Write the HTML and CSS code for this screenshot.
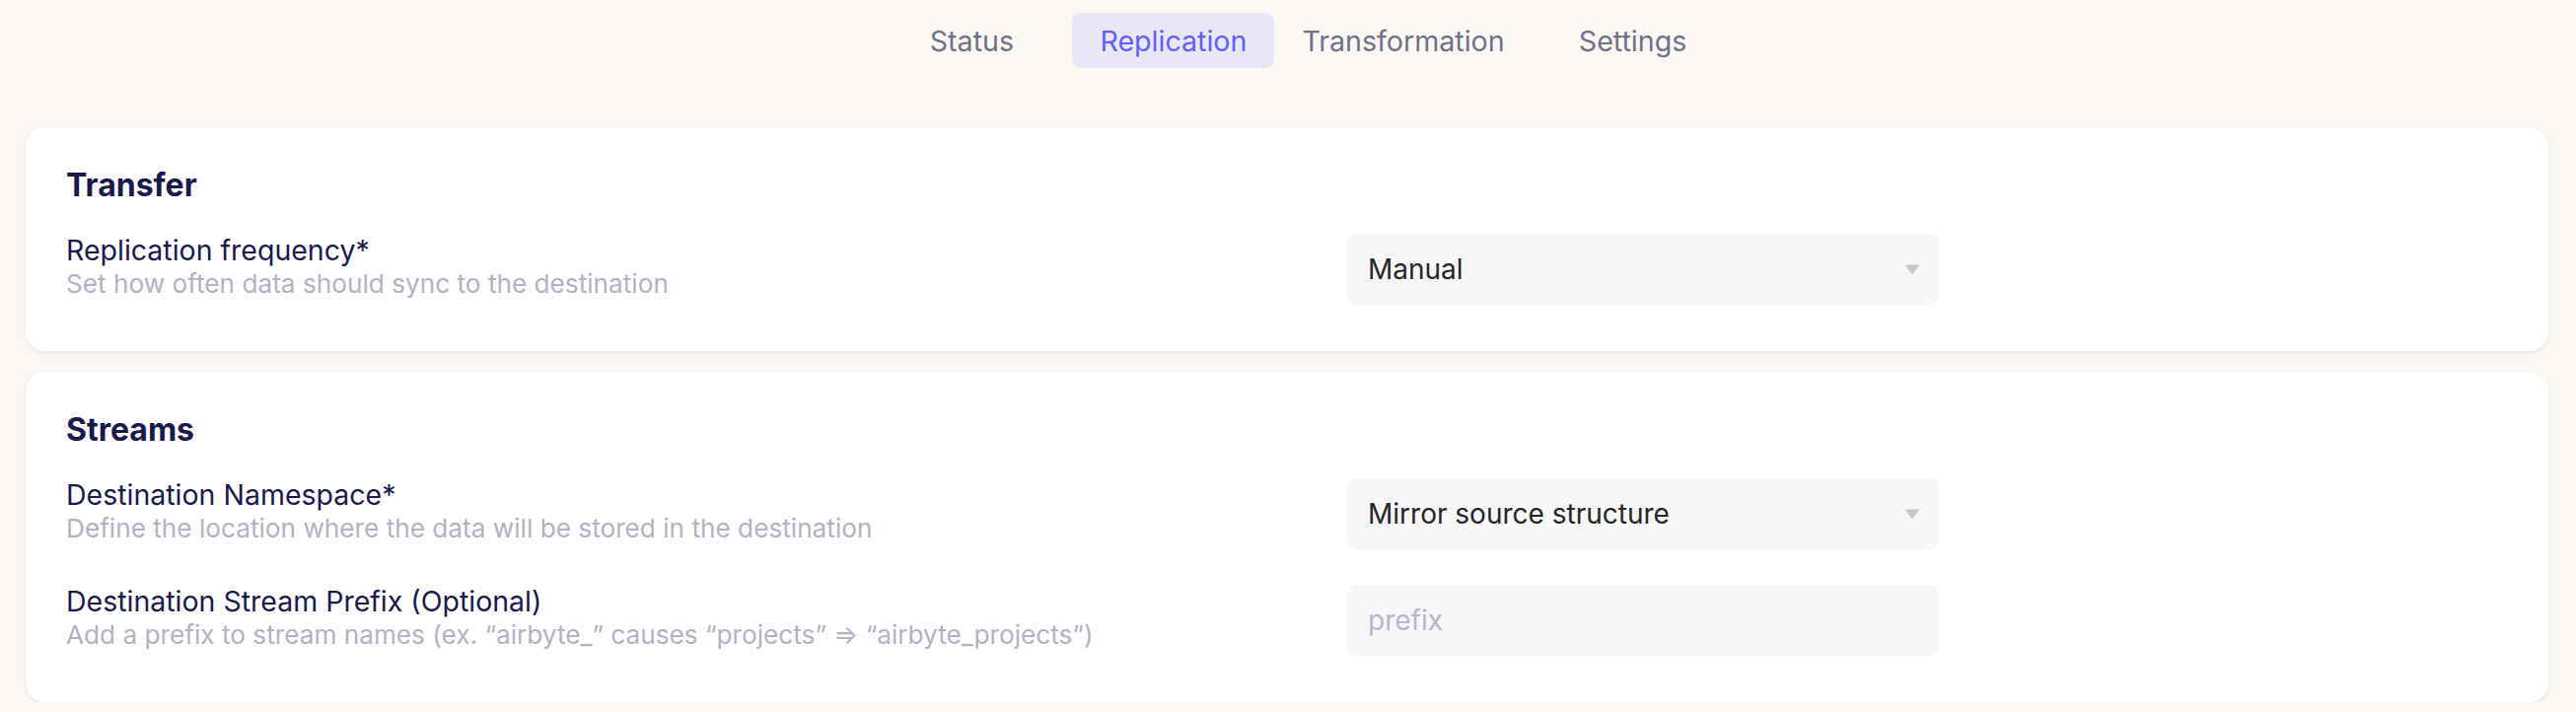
FILE: index.html
```html
<!DOCTYPE html>
<html lang="en">
<head>
<meta charset="utf-8">
<title>Replication</title>
<link rel="stylesheet" href="styles.css">
</head>
<body>
<nav class="tabs">
  <button class="tab">Status</button>
  <button class="tab tab-active">Replication</button>
  <button class="tab">Transformation</button>
  <button class="tab">Settings</button>
</nav>
<main class="content">
  <section class="card">
    <h2 class="card-title">Transfer</h2>
    <div class="fields">
      <div class="field">
        <div class="field-text">
          <div class="field-label">Replication frequency*</div>
          <div class="field-desc">Set how often data should sync to the destination</div>
        </div>
        <div class="select">
          <span class="select-value">Manual</span>
          <svg class="select-arrow" width="18" height="12" viewBox="0 0 18 12"><path d="M1.5 1.5 H16.5 L9.8 10.5 Q9 11.4 8.2 10.5 Z" fill="#c6c6c8"/></svg>
        </div>
      </div>
    </div>
  </section>
  <section class="card">
    <h2 class="card-title">Streams</h2>
    <div class="fields">
      <div class="field">
        <div class="field-text">
          <div class="field-label">Destination Namespace*</div>
          <div class="field-desc">Define the location where the data will be stored in the destination</div>
        </div>
        <div class="select">
          <span class="select-value">Mirror source structure</span>
          <svg class="select-arrow" width="18" height="12" viewBox="0 0 18 12"><path d="M1.5 1.5 H16.5 L9.8 10.5 Q9 11.4 8.2 10.5 Z" fill="#c6c6c8"/></svg>
        </div>
      </div>
      <div class="field">
        <div class="field-text">
          <div class="field-label">Destination Stream Prefix (Optional)</div>
          <div class="field-desc">Add a prefix to stream names (ex. “airbyte_” causes “projects” ⇒ “airbyte_projects”)</div>
        </div>
        <div class="input"><span class="placeholder">prefix</span></div>
      </div>
    </div>
  </section>
</main>
</body>
</html>
```

FILE: styles.css
```css
* { box-sizing: border-box; }

body {
  margin: 0;
  background: #fbf8f4;
  font-family: Inter, "Noto Sans", sans-serif;
  color: #1a194d;
}

.tabs {
  display: flex;
  justify-content: center;
  padding: 13px 0 0 29px;
}

.tab {
  min-width: 204px;
  height: 56px;
  padding: 0 28px;
  border: 0;
  border-radius: 9px;
  background: transparent;
  font-family: Inter, sans-serif;
  font-size: 28.6px;
  color: #717089;
  display: flex;
  align-items: center;
  justify-content: center;
}

.tab-active {
  background: #e9e6f8;
  color: #615eff;
}

.content {
  margin-top: 60px;
  padding: 0 28px 0 26px;
  display: flex;
  flex-direction: column;
  gap: 21px;
}

.card {
  background: #ffffff;
  border-radius: 20px;
  box-shadow: 0 2px 5px rgba(26, 25, 77, 0.09);
  padding: 42px 42px 47px 41px;
}

.card-title {
  margin: 0 0 32px;
  font-size: 32px;
  line-height: 34px;
  font-weight: 700;
  color: #1a194d;
}

.fields {
  display: flex;
  flex-direction: column;
  gap: 36px;
}

.field {
  display: grid;
  grid-template-columns: 1299px 600px;
  align-items: start;
}

.field-label {
  font-size: 28.5px;
  line-height: 34px;
  color: #1a194d;
}

.field-desc {
  font-size: 26.2px;
  line-height: 34px;
  color: #b3b1c6;
}

.select,
.input {
  height: 72px;
  border-radius: 9px;
  background: #f7f7f9;
  display: flex;
  align-items: center;
  justify-content: space-between;
  padding: 0 18px 0 21px;
  font-size: 28px;
}

.select-value {
  color: #262626;
}

.placeholder {
  color: #b8b6ca;
}
```
